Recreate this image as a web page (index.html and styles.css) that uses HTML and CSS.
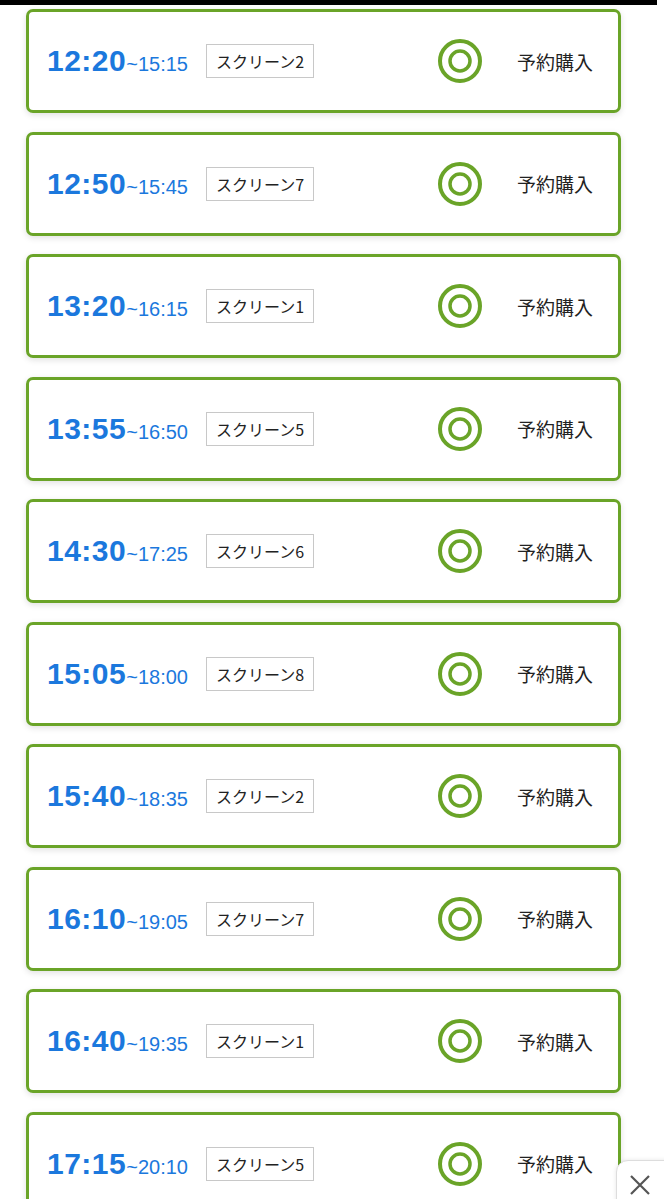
FILE: index.html
```html
<!DOCTYPE html>
<html lang="ja">

<head>
    <meta charset="UTF-8">
    <meta name="viewport" content="width=device-width, initial-scale=1.0">
    <title>上映スケジュール</title>
    <link rel="stylesheet" href="styles.css">
</head>

<body>
    <div class="topBar"></div>

    <ul class="showList">
        <li class="showCard">
            <div class="showInfo">
                <span class="startTime">12:20</span><span class="endTime">~15:15</span>
                <span class="screenTag">スクリーン2</span>
            </div>
            <svg class="seatMark" width="46" height="46" viewBox="0 0 46 46">
                <circle cx="23" cy="23" r="20" />
                <circle cx="23" cy="23" r="10" />
            </svg>
            <span class="buyLabel">予約購入</span>
        </li>
        <li class="showCard">
            <div class="showInfo">
                <span class="startTime">12:50</span><span class="endTime">~15:45</span>
                <span class="screenTag">スクリーン7</span>
            </div>
            <svg class="seatMark" width="46" height="46" viewBox="0 0 46 46">
                <circle cx="23" cy="23" r="20" />
                <circle cx="23" cy="23" r="10" />
            </svg>
            <span class="buyLabel">予約購入</span>
        </li>
        <li class="showCard">
            <div class="showInfo">
                <span class="startTime">13:20</span><span class="endTime">~16:15</span>
                <span class="screenTag">スクリーン1</span>
            </div>
            <svg class="seatMark" width="46" height="46" viewBox="0 0 46 46">
                <circle cx="23" cy="23" r="20" />
                <circle cx="23" cy="23" r="10" />
            </svg>
            <span class="buyLabel">予約購入</span>
        </li>
        <li class="showCard">
            <div class="showInfo">
                <span class="startTime">13:55</span><span class="endTime">~16:50</span>
                <span class="screenTag">スクリーン5</span>
            </div>
            <svg class="seatMark" width="46" height="46" viewBox="0 0 46 46">
                <circle cx="23" cy="23" r="20" />
                <circle cx="23" cy="23" r="10" />
            </svg>
            <span class="buyLabel">予約購入</span>
        </li>
        <li class="showCard">
            <div class="showInfo">
                <span class="startTime">14:30</span><span class="endTime">~17:25</span>
                <span class="screenTag">スクリーン6</span>
            </div>
            <svg class="seatMark" width="46" height="46" viewBox="0 0 46 46">
                <circle cx="23" cy="23" r="20" />
                <circle cx="23" cy="23" r="10" />
            </svg>
            <span class="buyLabel">予約購入</span>
        </li>
        <li class="showCard">
            <div class="showInfo">
                <span class="startTime">15:05</span><span class="endTime">~18:00</span>
                <span class="screenTag">スクリーン8</span>
            </div>
            <svg class="seatMark" width="46" height="46" viewBox="0 0 46 46">
                <circle cx="23" cy="23" r="20" />
                <circle cx="23" cy="23" r="10" />
            </svg>
            <span class="buyLabel">予約購入</span>
        </li>
        <li class="showCard">
            <div class="showInfo">
                <span class="startTime">15:40</span><span class="endTime">~18:35</span>
                <span class="screenTag">スクリーン2</span>
            </div>
            <svg class="seatMark" width="46" height="46" viewBox="0 0 46 46">
                <circle cx="23" cy="23" r="20" />
                <circle cx="23" cy="23" r="10" />
            </svg>
            <span class="buyLabel">予約購入</span>
        </li>
        <li class="showCard">
            <div class="showInfo">
                <span class="startTime">16:10</span><span class="endTime">~19:05</span>
                <span class="screenTag">スクリーン7</span>
            </div>
            <svg class="seatMark" width="46" height="46" viewBox="0 0 46 46">
                <circle cx="23" cy="23" r="20" />
                <circle cx="23" cy="23" r="10" />
            </svg>
            <span class="buyLabel">予約購入</span>
        </li>
        <li class="showCard">
            <div class="showInfo">
                <span class="startTime">16:40</span><span class="endTime">~19:35</span>
                <span class="screenTag">スクリーン1</span>
            </div>
            <svg class="seatMark" width="46" height="46" viewBox="0 0 46 46">
                <circle cx="23" cy="23" r="20" />
                <circle cx="23" cy="23" r="10" />
            </svg>
            <span class="buyLabel">予約購入</span>
        </li>
        <li class="showCard">
            <div class="showInfo">
                <span class="startTime">17:15</span><span class="endTime">~20:10</span>
                <span class="screenTag">スクリーン5</span>
            </div>
            <svg class="seatMark" width="46" height="46" viewBox="0 0 46 46">
                <circle cx="23" cy="23" r="20" />
                <circle cx="23" cy="23" r="10" />
            </svg>
            <span class="buyLabel">予約購入</span>
        </li>
    </ul>

    <button class="closeButton" aria-label="閉じる">
        <svg width="22" height="20" viewBox="0 0 22 20">
            <path d="M2 1 L20 19 M20 1 L2 19" />
        </svg>
    </button>
</body>

</html>
```

FILE: styles.css
```css
/* Showtime list */

html,
body {
    margin: 0;
    padding: 0;
    background-color: #fff;
    overflow: hidden;
}

body {
    font-family: "Liberation Sans", "Noto Sans CJK JP", sans-serif;
    color: #222;
}

.topBar {
    width: 657px;
    height: 5px;
    background-color: #000;
}

.showList {
    list-style: none;
    margin: 0;
    padding: 4px 0 0 26px;
}

.showCard {
    box-sizing: border-box;
    width: 595px;
    height: 104px;
    margin-bottom: 18.5px;
    padding: 0 25px 0 18px;

    display: flex;
    align-items: center;

    border: 3px solid #6aa428;
    border-radius: 7px;
    background-color: #fff;
    box-shadow: 0 2px 6px rgba(0, 0, 0, 0.12);
}

.showInfo {
    flex: 1;
    display: flex;
    align-items: baseline;
    color: #1b78dd;
}

.startTime {
    font-size: 30px;
    font-weight: bold;
    letter-spacing: 0.5px;
}

.endTime {
    font-size: 20px;
}

.screenTag {
    align-self: center;
    margin-left: 18px;
    padding: 5px 9px;
    border: 1px solid #c8c8c8;
    font-family: "Noto Sans CJK JP", sans-serif;
    font-size: 16px;
    line-height: 22px;
    color: #222;
}

.seatMark {
    display: block;
}

.seatMark circle {
    fill: none;
    stroke: #6aa428;
}

.seatMark circle:first-child {
    stroke-width: 4;
}

.seatMark circle:last-child {
    stroke-width: 3.5;
}

.buyLabel {
    margin-left: 34px;
    font-family: "Noto Sans CJK JP", sans-serif;
    font-size: 19px;
    color: #222;
}

.closeButton {
    position: absolute;
    left: 616px;
    top: 1160px;
    width: 60px;
    height: 50px;
    padding: 0 0 0 12px;

    display: flex;
    align-items: flex-start;
    padding-top: 14px;

    border: 1px solid #ddd;
    border-radius: 12px 0 0 0;
    background-color: #fff;
    box-shadow: 0 0 4px rgba(0, 0, 0, 0.1);
}

.closeButton path {
    fill: none;
    stroke: #555;
    stroke-width: 2.2;
}
```
